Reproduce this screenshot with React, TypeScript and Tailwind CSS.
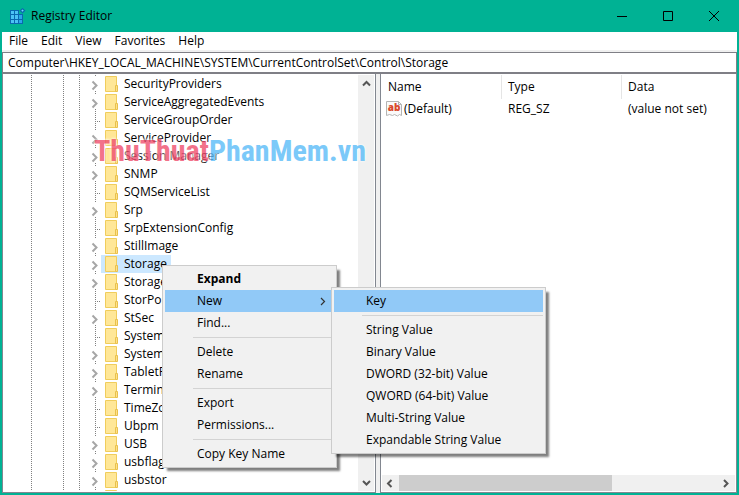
import React from "react";

type Branch = "closed" | "leaf";

const keys: { name: string; branch: Branch; selected?: boolean }[] = [
  { name: "SecurityProviders", branch: "closed" },
  { name: "ServiceAggregatedEvents", branch: "closed" },
  { name: "ServiceGroupOrder", branch: "leaf" },
  { name: "ServiceProvider", branch: "closed" },
  { name: "Session Manager", branch: "closed" },
  { name: "SNMP", branch: "closed" },
  { name: "SQMServiceList", branch: "leaf" },
  { name: "Srp", branch: "closed" },
  { name: "SrpExtensionConfig", branch: "leaf" },
  { name: "StillImage", branch: "closed" },
  { name: "Storage", branch: "closed", selected: true },
  { name: "StorageManagement", branch: "closed" },
  { name: "StorPort", branch: "leaf" },
  { name: "StSec", branch: "closed" },
  { name: "SystemInformation", branch: "leaf" },
  { name: "SystemResources", branch: "closed" },
  { name: "TabletPC", branch: "closed" },
  { name: "Terminal Server", branch: "closed" },
  { name: "TimeZoneInformation", branch: "leaf" },
  { name: "Ubpm", branch: "leaf" },
  { name: "USB", branch: "closed" },
  { name: "usbflags", branch: "closed" },
  { name: "usbstor", branch: "closed" },
  { name: "", branch: "closed" },
];

function RegistryIcon() {
  return (
    <svg width="16" height="16" viewBox="0 0 16 16" aria-hidden="true">
      <path d="M0 2h9v4h4v10H0z" fill="#0a68b0" />
      <g fill="#4cc2f5">
        <path d="M1 3h3v3H1zM5 3h3v3H5zM1 7h3v4H1zM5 7h3v4H5zM1 12h3v3H1zM5 12h3v3H5z" />
        <path d="M9 7h3v4H9zM9 12h3v3H9z" fill="#2ba6ea" />
      </g>
      <path d="M12.500 0l3 2.500-3 3-3-3z" fill="#0a6cae" />
      <path d="M12.500 1.500l1.200 1.100-1.200 1.200-1.200-1.200z" fill="#6fd6ff" />
    </svg>
  );
}

function FolderIcon() {
  return (
    <svg width="13" height="16" viewBox="0 0 13 16" aria-hidden="true" className="shrink-0">
      <path d="M.5.5h11v15H.5z" fill="#ffe797" stroke="#f0cd5c" />
      <path d="M10.500 9.500h2v6h-2z" fill="#ffe08a" stroke="#e8c14c" />
    </svg>
  );
}

function StringValueIcon() {
  return (
    <svg width="16" height="16" viewBox="0 0 16 16" aria-hidden="true" className="shrink-0">
      <path d="M.5.500h12l3 3v11l-2-1-2 1.500-3-1.500-2 1-3-1-3 1z" fill="#fafafa" stroke="#b4b4b4" />
      <path d="M12.500.500v3h3" fill="none" stroke="#b4b4b4" />
      <text x="8" y="10" textAnchor="middle" fill="#d9482b" className="font-['Open_Sans',sans-serif] text-[10px] font-extrabold">
        ab
      </text>
    </svg>
  );
}

function Chevron({ dir }: { dir: "up" | "down" | "left" | "right" }) {
  const d = {
    up: "M4 9.500l3.500-3.500L11 9.500",
    down: "M4 6l3.500 3.500L11 6",
    left: "M9.500 4L6 7.500 9.500 11",
    right: "M6 4l3.500 3.500L6 11",
  }[dir];
  return (
    <svg width="15" height="15" viewBox="0 0 15 15" aria-hidden="true">
      <path d={d} fill="none" stroke="#555" strokeWidth="2" />
    </svg>
  );
}

function Guide({ className }: { className: string }) {
  return (
    <span
      className={`h-full w-px shrink-0 bg-[repeating-linear-gradient(to_bottom,#808080_0_1px,transparent_1px_2px)] ${className}`}
    />
  );
}

function BranchMark({ branch }: { branch: Branch }) {
  if (branch === "leaf") {
    return (
      <svg width="21" height="18" viewBox="0 0 21 18" aria-hidden="true" className="shrink-0">
        <path d="M15.500 0v18M15 10.500h8" fill="none" stroke="#808080" strokeDasharray="1 1" />
      </svg>
    );
  }
  return (
    <button type="button" aria-label="Expand key" className="h-[18px] w-[21px] shrink-0">
      <svg width="21" height="18" viewBox="0 0 21 18" aria-hidden="true">
        <path d="M15.500 0v1M15.500 16v1" stroke="#808080" />
        <path d="M12.500 6.500l4 4-4 4" fill="none" stroke="#a6a6a6" strokeWidth="2" />
      </svg>
    </button>
  );
}

function MenuItem({ label, bold, active, arrow }: { label: string; bold?: boolean; active?: boolean; arrow?: boolean }) {
  return (
    <button
      type="button"
      role="menuitem"
      className={`flex h-[22px] w-full items-center justify-between pr-2 pl-8 text-left whitespace-nowrap ${
        active ? "bg-[#91c9f7]" : ""
      } ${bold ? "font-bold" : ""}`}
    >
      {label}
      {arrow && (
        <svg width="6" height="9" viewBox="0 0 6 9" aria-hidden="true">
          <path d="M1 1l3.500 3.500L1 8" fill="none" stroke="#333" strokeWidth="1.200" />
        </svg>
      )}
    </button>
  );
}

function MenuSeparator() {
  return <div role="separator" className="my-[3px] ml-7 h-px bg-[#d3d3d3]" />;
}

const menuBox =
  "absolute border border-[#ccc] bg-[#f1f1f1] p-0.5 shadow-[4px_4px_2px_-1px_rgba(0,0,0,0.5)]";

export default function App() {
  return (
    <div className="relative flex h-screen w-full flex-col overflow-hidden bg-[#00b294] px-0.5 pb-0.5 font-['Open_Sans','Noto_Sans',sans-serif] text-[12px] leading-[18px] text-black">
      <header className="flex h-8 shrink-0 items-center pl-2">
        <RegistryIcon />
        <h1 className="ml-[5px] flex-1">Registry Editor</h1>
        <button type="button" aria-label="Minimize" className="flex h-8 w-[46px] items-center justify-center">
          <svg width="10" height="11" viewBox="0 0 10 11">
            <path d="M0 5.500h10" stroke="#000" />
          </svg>
        </button>
        <button type="button" aria-label="Maximize" className="flex h-8 w-[46px] items-center justify-center">
          <svg width="10" height="10" viewBox="0 0 10 10">
            <path d="M.5.500h9v9h-9z" fill="none" stroke="#000" />
          </svg>
        </button>
        <button type="button" aria-label="Close" className="flex h-8 w-[46px] items-center justify-center">
          <svg width="10" height="10" viewBox="0 0 10 10">
            <path d="M0 0l10 10M10 0L0 10" stroke="#000" />
          </svg>
        </button>
      </header>

      <nav className="flex h-5 shrink-0 items-center gap-[13px] border-b-2 border-[#f0f0f0] bg-white pl-[7px]">
        <button type="button">File</button>
        <button type="button">Edit</button>
        <button type="button">View</button>
        <button type="button">Favorites</button>
        <button type="button">Help</button>
      </nav>

      <input
        aria-label="Key path"
        defaultValue="Computer\HKEY_LOCAL_MACHINE\SYSTEM\CurrentControlSet\Control\Storage"
        className="h-[22px] shrink-0 border border-b-2 border-[#7f7f86] bg-white pl-[5px] outline-none"
      />

      <main className="flex min-h-0 flex-1 bg-[#f0f0f0]">
        <section className="flex w-[374px] shrink-0 border border-t-0 border-[#828790] bg-white py-px pr-px">
          <ul className="min-w-0 flex-1 overflow-hidden">
            {keys.map((key, i) => (
              <li key={i} className="flex h-[18px] items-center">
                <Guide className="ml-7" />
                <Guide className="ml-[31px]" />
                <Guide className="ml-[15px]" />
                <BranchMark branch={key.branch} />
                <span
                  className={`flex h-full items-center gap-1.5 px-1 whitespace-nowrap ${
                    key.selected ? "bg-[#cce8ff]" : ""
                  }`}
                >
                  <FolderIcon />
                  {key.name}
                </span>
              </li>
            ))}
          </ul>
          <div className="flex w-4 flex-col items-center justify-between bg-[#f0f0f0] py-px">
            <button type="button" aria-label="Scroll up">
              <Chevron dir="up" />
            </button>
            <button type="button" aria-label="Scroll down">
              <Chevron dir="down" />
            </button>
          </div>
        </section>

        <section className="ml-1 flex min-w-0 flex-1 flex-col border border-t-0 border-[#828790] bg-white p-px">
          <div className="flex-1">
            <table className="w-full table-fixed border-separate border-spacing-0 text-left">
              <thead>
                <tr className="h-6">
                  <th className="w-[120px] border-r border-[#e5e5e5] p-0 pl-1.5 font-normal">Name</th>
                  <th className="w-[120px] border-r border-[#e5e5e5] p-0 pl-1.5 font-normal">Type</th>
                  <th className="p-0 pl-1.5 font-normal">Data</th>
                </tr>
              </thead>
              <tbody>
                <tr className="h-5">
                  <td className="p-0">
                    <span className="flex items-center gap-0.5 pl-1">
                      <StringValueIcon />
                      (Default)
                    </span>
                  </td>
                  <td className="p-0 pl-1.5">REG_SZ</td>
                  <td className="p-0 pl-1.5">(value not set)</td>
                </tr>
              </tbody>
            </table>
          </div>
          <div className="flex h-4 items-center bg-[#f0f0f0]">
            <button type="button" aria-label="Scroll left" className="w-[17px]">
              <Chevron dir="left" />
            </button>
            <div className="h-full flex-1">
              <div className="h-full w-2/3 bg-[#cdcdcd]" />
            </div>
            <button type="button" aria-label="Scroll right" className="w-[17px]">
              <Chevron dir="right" />
            </button>
          </div>
        </section>
      </main>

      <div className="pointer-events-none absolute top-[134px] left-[94px] font-['Roboto_Condensed','Liberation_Sans_Narrow','Liberation_Sans',sans-serif] text-[30px] leading-[34px] font-bold opacity-80 [text-shadow:0_0_3px_#fff,0_0_3px_#fff]">
        <span className="text-[#f0506e]">ThuThuat</span>
        <span className="text-[#5bbcf8]">PhanMem.vn</span>
      </div>

      <div role="menu" aria-label="Key actions" className={`${menuBox} top-[265px] left-[162px] w-[175px]`}>
        <MenuItem label="Expand" bold />
        <MenuItem label="New" active arrow />
        <MenuItem label="Find..." />
        <MenuSeparator />
        <MenuItem label="Delete" />
        <MenuItem label="Rename" />
        <MenuSeparator />
        <MenuItem label="Export" />
        <MenuItem label="Permissions..." />
        <MenuSeparator />
        <MenuItem label="Copy Key Name" />
      </div>

      <div role="menu" aria-label="New" className={`${menuBox} top-[287px] left-[331px] w-[215px]`}>
        <MenuItem label="Key" active />
        <MenuSeparator />
        <MenuItem label="String Value" />
        <MenuItem label="Binary Value" />
        <MenuItem label="DWORD (32-bit) Value" />
        <MenuItem label="QWORD (64-bit) Value" />
        <MenuItem label="Multi-String Value" />
        <MenuItem label="Expandable String Value" />
      </div>
    </div>
  );
}
